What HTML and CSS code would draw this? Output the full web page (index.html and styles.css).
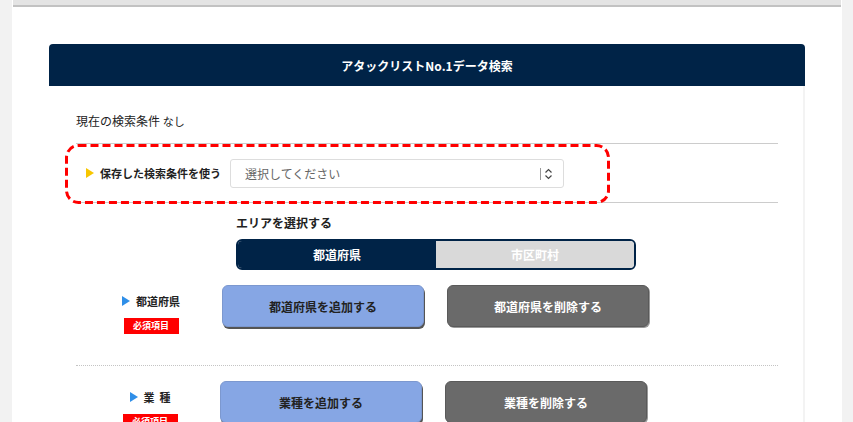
FILE: index.html
```html
<!DOCTYPE html>
<html lang="ja">
<head>
<meta charset="utf-8">
<title>アタックリストNo.1データ検索</title>
<link rel="stylesheet" href="styles.css">
</head>
<body>
<div class="page">
  <div class="topbar"></div>
  <div class="card">
    <div class="card-head">アタックリストNo.1データ検索</div>
    <div class="card-body">
      <p class="current">現在の検索条件 <span class="none">なし</span></p>
      <div class="saved">
        <svg class="highlight" width="545" height="60" viewBox="0 0 545 60">
          <rect x="1.5" y="1.5" width="542" height="57" rx="12" ry="12" fill="none" stroke="#ff0000" stroke-width="3" stroke-dasharray="8 4"/>
        </svg>
        <span class="tri tri-yellow"></span>
        <span class="saved-label">保存した検索条件を使う</span>
        <div class="select">
          <span>選択してください</span>
          <svg class="select-arrows" width="14" height="12" viewBox="0 0 14 12">
            <line x1="0.5" y1="0" x2="0.5" y2="12" stroke="#999" stroke-width="1"/>
            <polyline points="5.5,4.5 8.5,1.5 11.5,4.5" fill="none" stroke="#444" stroke-width="1.2"/>
            <polyline points="5.5,7.5 8.5,10.5 11.5,7.5" fill="none" stroke="#444" stroke-width="1.2"/>
          </svg>
        </div>
      </div>
      <div class="area">
        <div class="area-title">エリアを選択する</div>
        <div class="toggle">
          <div class="tog on">都道府県</div>
          <div class="tog off">市区町村</div>
        </div>
      </div>
      <div class="row">
        <div class="row-label">
          <div class="label-name"><span class="tri tri-blue"></span>都道府県</div>
          <div class="req">必須項目</div>
        </div>
        <button class="btn add">都道府県を追加する</button>
        <button class="btn del">都道府県を削除する</button>
      </div>
      <div class="row row2">
        <div class="row-label">
          <div class="label-name"><span class="tri tri-blue"></span><span class="sp">業</span>種</div>
          <div class="req">必須項目</div>
        </div>
        <button class="btn add">業種を追加する</button>
        <button class="btn del">業種を削除する</button>
      </div>
    </div>
  </div>
</div>
</body>
</html>
```
FILE: styles.css
```css
* { box-sizing: border-box; }

body {
  margin: 0;
  background: #f2f2f2;
  font-family: "Noto Sans CJK JP", "Noto Sans", sans-serif;
  color: #222;
  overflow: hidden;
}

.page {
  margin: 0 11px 0 12px;
  background: #fff;
  height: 422px;
  overflow: hidden;
}

.topbar {
  height: 7px;
  background: #e4e4e4;
  border-bottom: 2px solid #c2c2c2;
  margin: 0 1px 0 1px;
}

.card {
  margin: 37px 0 0 37px;
  width: 756px;
}

.card-head {
  height: 42px;
  background: #002347;
  border-radius: 4px 4px 0 0;
  color: #fff;
  font-weight: 700;
  font-size: 12px;
  display: flex;
  align-items: center;
  justify-content: center;
}

.card-body {
  border-right: 2px solid #f3f3f3;
  padding: 25px 25px 0 27px;
}

.current {
  margin: 0 0 12px;
  font-size: 12px;
  line-height: 20px;
  height: 20px;
}

.none { font-size: 11px; }

.saved {
  position: relative;
  display: flex;
  align-items: center;
  height: 60px;
  border-top: 1px solid #cccccc;
  border-bottom: 1px solid #cccccc;
  padding-left: 10px;
}

.highlight {
  position: absolute;
  left: -11px;
  top: 0;
}

.tri {
  display: inline-block;
  width: 0;
  height: 0;
  border-top: 5px solid transparent;
  border-bottom: 5px solid transparent;
}

.tri-yellow {
  border-left: 8px solid #f7c600;
  margin-right: 6px;
}

.tri-blue {
  border-left: 8px solid #2f8fe8;
  margin-right: 6px;
}

.saved-label {
  font-size: 11px;
  font-weight: 700;
}

.select {
  margin-left: 9px;
  width: 334px;
  height: 29px;
  border: 1px solid #dddddd;
  border-radius: 3px;
  padding: 0 9px 0 14px;
  display: flex;
  align-items: center;
  justify-content: space-between;
  font-size: 12px;
  color: #666;
}

.select-arrows { margin-top: 2px; }

.area {
  margin-left: 160px;
  padding-top: 12px;
}

.area-title {
  font-size: 12px;
  font-weight: 700;
  line-height: 16px;
  margin-bottom: 8px;
}

.toggle {
  width: 400px;
  height: 31px;
  border: 2px solid #002347;
  border-radius: 6px;
  overflow: hidden;
  display: flex;
}

.tog {
  flex: 1;
  display: flex;
  align-items: center;
  justify-content: center;
  font-size: 12px;
  font-weight: 700;
  color: #fff;
}

.tog.on { background: #002347; }
.tog.off { background: #d9d9d9; }

.row {
  display: flex;
  align-items: flex-start;
  margin-top: 15px;
  padding-bottom: 31px;
  border-bottom: 1px dotted #c4c4c4;
}

.row2 {
  margin-top: 0;
  padding-top: 15px;
  border-bottom: none;
}

.row-label {
  width: 146px;
  padding: 9px 0 0 4px;
  display: flex;
  flex-direction: column;
  align-items: center;
}

.row2 .row-label { width: 144px; }

.label-name {
  display: flex;
  align-items: center;
  font-size: 11px;
  font-weight: 700;
  line-height: 14px;
}

.sp { margin-right: 5px; }

.req {
  margin-top: 10px;
  width: 55px;
  height: 16px;
  background: #ff0000;
  color: #fff;
  font-size: 9px;
  font-weight: 700;
  line-height: 16px;
  text-align: center;
}

.btn {
  width: 202px;
  height: 42px;
  border-radius: 6px;
  font-family: inherit;
  font-size: 12px;
  font-weight: 700;
  margin-right: 23px;
  padding: 0;
  cursor: pointer;
}

.btn.add {
  background: #86a6e4;
  color: #222;
  border: 1px solid #7c98cf;
  box-shadow: 1px 2px 0 #555;
}

.btn.del {
  background: #6a6a6a;
  color: #fff;
  border: 1px solid #5a5a5a;
  box-shadow: 1px 1px 0 #999;
}
```
